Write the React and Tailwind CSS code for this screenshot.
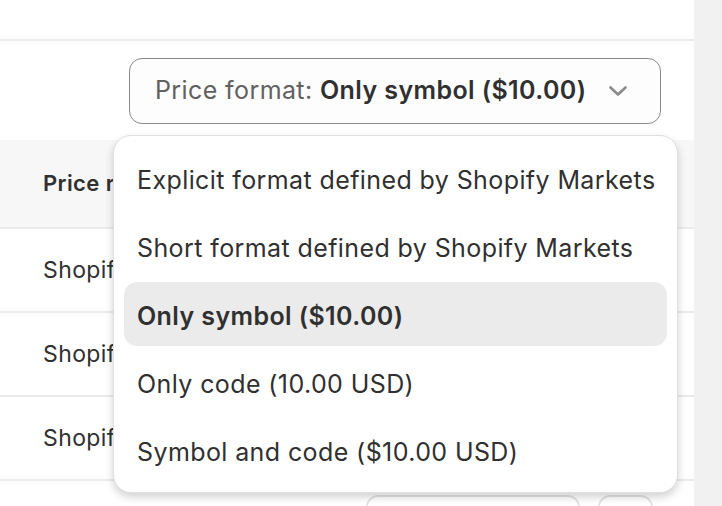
import React from "react";

const font = { fontFamily: "Inter, 'Noto Sans', sans-serif" };

export default function App() {
  const items = [
    "Explicit format defined by Shopify Markets",
    "Short format defined by Shopify Markets",
    "Only symbol ($10.00)",
    "Only code (10.00 USD)",
    "Symbol and code ($10.00 USD)",
  ];
  return (
    <div className="relative flex w-[722px] h-[506px] overflow-hidden bg-white text-[#303030]" style={font}>
      <div className="w-[694px] flex flex-col bg-white">
        <div className="h-[41px] border-b-2 border-[#ebebeb] shrink-0" />
        <div className="h-[99px] flex justify-end items-start pt-[17px] pr-[33px] shrink-0">
          <button className="h-[66px] w-[532px] rounded-[13px] border border-[#8a8a8a] bg-[#fdfdfd] flex items-center pl-[25px] pr-[32px] text-[25px] tracking-[0.4px]">
            <span className="text-[#616161]">Price format:&nbsp;</span>
            <span className="font-semibold">Only symbol ($10.00)</span>
            <svg className="ml-auto" width="20" height="12" viewBox="0 0 20 12" fill="none">
              <path d="M2.5 2.5 L10 9.5 L17.5 2.5" stroke="#8a8a8a" strokeWidth="2.6" strokeLinecap="round" strokeLinejoin="round" />
            </svg>
          </button>
        </div>
        <div className="h-[89px] bg-[#f7f7f7] border-b-2 border-[#ebebeb] flex items-center pl-[43px] text-[22px] tracking-[0.4px] font-semibold shrink-0">
          Price rule
        </div>
        {[0, 1, 2].map((i) => (
          <div key={i} className="h-[84px] border-b-2 border-[#ebebeb] flex items-center pl-[43px] text-[23px] tracking-[0.4px] shrink-0">
            Shopify Markets
          </div>
        ))}
        <div className="flex gap-[18px] pl-[366px] pt-[14px]">
          <div className="w-[214px] h-[40px] rounded-[12px] border-2 border-[#e3e3e3]" />
          <div className="w-[55px] h-[40px] rounded-[12px] border-2 border-[#e3e3e3]" />
        </div>
      </div>
      <div className="flex-1 bg-[#f1f1f1]" />

      <div className="absolute left-[113px] top-[135px] w-[565px] rounded-[18px] bg-white border border-[#e0e0e0] shadow-[0_4px_8px_rgba(0,0,0,0.18)] px-[10px] pt-[10px] pb-[10px] flex flex-col gap-[4px]">
        {items.map((t, i) => (
          <div
            key={t}
            className={
              "h-[64px] shrink-0 flex items-center pl-[13px] pt-[6px] rounded-[13px] text-[25px] tracking-[0.4px] " +
              (i === 2 ? "bg-[#ebebeb] font-semibold" : "")
            }
          >
            {t}
          </div>
        ))}
      </div>
    </div>
  );
}
